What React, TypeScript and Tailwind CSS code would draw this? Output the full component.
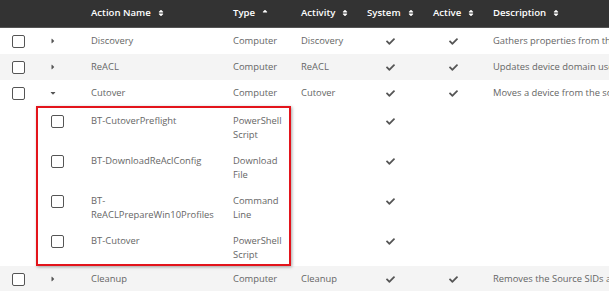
import { FaCheck, FaSort, FaSortUp, FaCaretRight, FaCaretDown } from "react-icons/fa";

type Row = {
  name: string;
  type: string;
  activity: string;
  system: boolean;
  active: boolean;
  description: string;
  open?: boolean;
};

const cols = "grid grid-cols-[36px_45px_142px_68px_66px_66px_60px_1fr]";

function Box() {
  return <div className="w-[13px] h-[13px] rounded-[2px] border-[1.5px] border-[#555] bg-white" />;
}

function Head({ label, up }: { label: string; up?: boolean }) {
  return (
    <div className="flex items-center gap-[6px] whitespace-nowrap">
      <span>{label}</span>
      {up ? <FaSortUp className="w-[8px] h-[8px]" /> : <FaSort className="w-[8px] h-[8px]" />}
    </div>
  );
}

function Check({ on }: { on: boolean }) {
  return on ? <FaCheck className="w-[9px] h-[9px] text-[#555]" /> : null;
}

function MainRow({ r, alt }: { r: Row; alt: boolean }) {
  return (
    <div className={`${cols} h-[26px] items-center ${alt ? "bg-[#f4f4f4]" : "bg-white"}`}>
      <div className="flex justify-center pl-[1px]">
        <Box />
      </div>
      <div className="flex pl-[13px] text-[#555]">
        {r.open ? <FaCaretDown className="w-[8px] h-[8px]" /> : <FaCaretRight className="w-[8px] h-[8px]" />}
      </div>
      <div className="pl-[10px]">{r.name}</div>
      <div className="pl-[10px]">{r.type}</div>
      <div className="pl-[10px]">{r.activity}</div>
      <div className="flex justify-center">
        <Check on={r.system} />
      </div>
      <div className="flex justify-center">
        <Check on={r.active} />
      </div>
      <div className="pl-[10px] whitespace-nowrap overflow-hidden">{r.description}</div>
    </div>
  );
}

function ChildRow({ name, type }: { name: string; type: string }) {
  return (
    <div className={`${cols} h-[40px] items-start pt-[8px] bg-white leading-[14px]`}>
      <div />
      <div className="flex pl-[15px] pt-[1px]">
        <Box />
      </div>
      <div className="pl-[10px] pr-[6px]">{name}</div>
      <div className="pl-[10px] pr-[4px]">{type}</div>
      <div />
      <div className="flex justify-center pt-[3px]">
        <Check on />
      </div>
      <div />
      <div />
    </div>
  );
}

const rows: Row[] = [
  { name: "Discovery", type: "Computer", activity: "Discovery", system: true, active: true, description: "Gathers properties from the source computer" },
  { name: "ReACL", type: "Computer", activity: "ReACL", system: true, active: true, description: "Updates device domain user profiles and permissions" },
  { name: "Cutover", type: "Computer", activity: "Cutover", system: true, active: true, description: "Moves a device from the source domain to the target", open: true },
];

const children = [
  { name: "BT-CutoverPreflight", type: "PowerShell Script" },
  { name: "BT-DownloadReAclConfig", type: "Download File" },
  { name: "BT-ReACLPrepareWin10Profiles", type: "Command Line" },
  { name: "BT-Cutover", type: "PowerShell Script" },
];

export default function App() {
  return (
    <div className="relative w-[609px] h-[291px] overflow-hidden bg-white text-[9.4px] text-[#666] font-['Open_Sans',sans-serif]">
      <div className={`${cols} h-[28px] items-center bg-[#333] text-white text-[9.6px] font-semibold border-b border-[#555]`}>
        <div />
        <div />
        <div className="pl-[10px]"><Head label="Action Name" /></div>
        <div className="pl-[10px]"><Head label="Type" up /></div>
        <div className="pl-[10px]"><Head label="Activity" /></div>
        <div className="pl-[10px]"><Head label="System" /></div>
        <div className="pl-[10px]"><Head label="Active" /></div>
        <div className="pl-[10px]"><Head label="Description" /></div>
      </div>
      {rows.map((r, i) => (
        <MainRow key={r.name} r={r} alt={i % 2 === 1} />
      ))}
      {children.map((c) => (
        <ChildRow key={c.name} name={c.name} type={c.type} />
      ))}
      <MainRow
        r={{ name: "Cleanup", type: "Computer", activity: "Cleanup", system: true, active: true, description: "Removes the Source SIDs and cleans up the device" }}
        alt
      />
      <div className="absolute left-[36px] top-[106px] w-[255px] h-[160px] border-2 border-[#e3141b] shadow-[1px_1px_3px_rgba(0,0,0,0.35)]" />
    </div>
  );
}
